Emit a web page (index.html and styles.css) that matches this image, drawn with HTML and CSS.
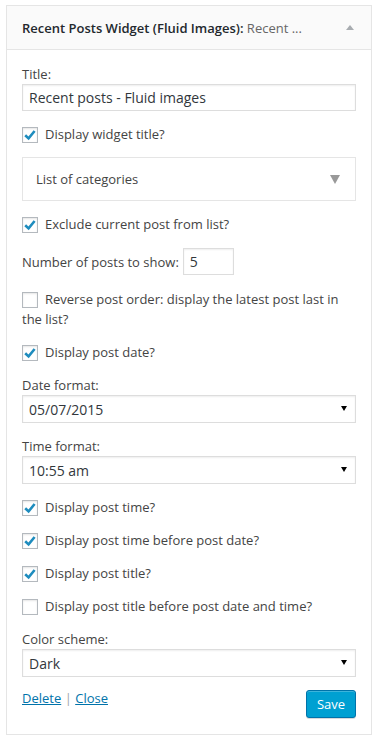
FILE: index.html
```html
<!DOCTYPE html>
<html lang="en">
<head>
<meta charset="utf-8">
<title>Recent Posts Widget</title>
<link rel="stylesheet" href="styles.css">
</head>
<body>
<div class="widget">
  <div class="widget-top">
    <h3 class="widget-title">Recent Posts Widget (Fluid Images):<span class="in-title"> Recent ...</span></h3>
    <svg class="toggle" width="8" height="5" viewBox="0 0 8 5"><path d="M0 5L4 0L8 5Z" fill="#a8acb0"/></svg>
  </div>
  <div class="widget-inside">
    <p class="field">
      <label class="lbl">Title:</label>
      <input class="text-input" type="text" value="Recent posts - Fluid images">
    </p>
    <p class="check"><span class="cb on"><svg width="14" height="14" viewBox="0 0 14 14"><path d="M2.2 7.2L5.6 10.4L11.6 3" fill="none" stroke="#1e8cbe" stroke-width="2.6"/></svg></span>Display widget title?</p>
    <div class="cat-box">
      <span>List of categories</span>
      <svg width="10" height="9" viewBox="0 0 10 9"><path d="M0 0H10L5 9Z" fill="#999"/></svg>
    </div>
    <p class="check"><span class="cb on"><svg width="14" height="14" viewBox="0 0 14 14"><path d="M2.2 7.2L5.6 10.4L11.6 3" fill="none" stroke="#1e8cbe" stroke-width="2.6"/></svg></span>Exclude current post from list?</p>
    <p class="num">
      <span>Number of posts to show:</span>
      <input class="num-input" type="text" value="5">
    </p>
    <p class="check"><span class="cb"></span>Reverse post order: display the latest post last in the list?</p>
    <p class="check"><span class="cb on"><svg width="14" height="14" viewBox="0 0 14 14"><path d="M2.2 7.2L5.6 10.4L11.6 3" fill="none" stroke="#1e8cbe" stroke-width="2.6"/></svg></span>Display post date?</p>
    <div class="field">
      <div class="lbl">Date format:</div>
      <div class="select"><span>05/07/2015</span><svg class="sel-arrow" width="6" height="5" viewBox="0 0 6 5"><path d="M0 0H6L3 5Z" fill="#000"/></svg></div>
    </div>
    <div class="field">
      <div class="lbl">Time format:</div>
      <div class="select"><span>10:55 am</span><svg class="sel-arrow" width="6" height="5" viewBox="0 0 6 5"><path d="M0 0H6L3 5Z" fill="#000"/></svg></div>
    </div>
    <p class="check"><span class="cb on"><svg width="14" height="14" viewBox="0 0 14 14"><path d="M2.2 7.2L5.6 10.4L11.6 3" fill="none" stroke="#1e8cbe" stroke-width="2.6"/></svg></span>Display post time?</p>
    <p class="check"><span class="cb on"><svg width="14" height="14" viewBox="0 0 14 14"><path d="M2.2 7.2L5.6 10.4L11.6 3" fill="none" stroke="#1e8cbe" stroke-width="2.6"/></svg></span>Display post time before post date?</p>
    <p class="check"><span class="cb on"><svg width="14" height="14" viewBox="0 0 14 14"><path d="M2.2 7.2L5.6 10.4L11.6 3" fill="none" stroke="#1e8cbe" stroke-width="2.6"/></svg></span>Display post title?</p>
    <p class="check"><span class="cb"></span>Display post title before post date and time?</p>
    <div class="field">
      <div class="lbl">Color scheme:</div>
      <div class="select"><span>Dark</span><svg class="sel-arrow" width="6" height="5" viewBox="0 0 6 5"><path d="M0 0H6L3 5Z" fill="#000"/></svg></div>
    </div>
    <div class="actions">
      <div class="links"><a href="#">Delete</a> <span class="sep">|</span> <a href="#">Close</a></div>
      <button class="save" type="button">Save</button>
    </div>
  </div>
</div>
</body>
</html>
```
FILE: styles.css
```css
body {
  margin: 5px 5px 0 6px;
  font-family: "Open Sans", "Liberation Sans", sans-serif;
  font-size: 13px;
  color: #444;
  background: #fff;
}

.widget {
  width: 366px;
  box-sizing: border-box;
  border: 1px solid #e5e5e5;
  background: #fff;
  box-shadow: 0 1px 1px rgba(0, 0, 0, 0.04);
}

.widget-top {
  height: 43px;
  background: #fafafa;
  border-bottom: 1px solid #e5e5e5;
  display: flex;
  align-items: center;
  justify-content: space-between;
  padding: 0 17px 0 15px;
}

.widget-title {
  margin: 0;
  font-size: 13px;
  font-weight: 600;
  line-height: 20px;
  color: #23282d;
  white-space: nowrap;
  overflow: hidden;
}

.in-title {
  font-weight: 400;
  color: #666;
}

.toggle {
  display: block;
  flex: none;
}

.widget-inside {
  padding: 1px 15px 16px;
}

p {
  margin: 13px 0;
  line-height: 20px;
}

.field {
  margin: 13px 0;
}

.lbl {
  display: block;
  line-height: 20px;
}

.text-input {
  display: block;
  width: 100%;
  height: 27px;
  box-sizing: border-box;
  margin: 0;
  padding: 0 6px;
  border: 1px solid #ddd;
  border-radius: 0;
  box-shadow: inset 0 1px 2px rgba(0, 0, 0, 0.07);
  font-family: "Open Sans", "Liberation Sans", sans-serif;
  font-size: 14px;
  color: #32373c;
  background: #fff;
  outline: none;
}

.cb {
  display: inline-block;
  width: 16px;
  height: 16px;
  box-sizing: border-box;
  border: 1px solid #b4b9be;
  background: #fff;
  box-shadow: inset 0 1px 2px rgba(0, 0, 0, 0.1);
  vertical-align: -4px;
  margin-right: 7px;
}

.cb svg {
  display: block;
}

.cat-box {
  height: 44px;
  box-sizing: border-box;
  margin: 13px 0;
  border: 1px solid #e5e5e5;
  display: flex;
  align-items: center;
  justify-content: space-between;
  padding: 0 15px 0 13px;
}

.cat-box svg {
  display: block;
}

.num {
  display: flex;
  align-items: center;
  height: 29px;
}

.num-input {
  margin: 0 0 0 4px;
  width: 51px;
  height: 27px;
  box-sizing: border-box;
  padding: 0 6px;
  border: 1px solid #ddd;
  border-radius: 0;
  box-shadow: inset 0 1px 2px rgba(0, 0, 0, 0.07);
  font-family: "Open Sans", "Liberation Sans", sans-serif;
  font-size: 14px;
  color: #32373c;
  background: #fff;
  outline: none;
}

.select {
  height: 28px;
  box-sizing: border-box;
  border: 1px solid #ddd;
  box-shadow: inset 0 1px 2px rgba(0, 0, 0, 0.07);
  display: flex;
  align-items: center;
  justify-content: space-between;
  padding: 0 8px 0 6px;
  font-size: 14px;
  color: #32373c;
  background: #fff;
}

.sel-arrow {
  display: block;
  margin-bottom: 2px;
}

.actions {
  margin-top: 13px;
  display: flex;
  justify-content: space-between;
  align-items: flex-start;
}

.links {
  line-height: 20px;
  margin-top: -2px;
}

.links a {
  color: #0073aa;
  text-decoration: underline;
}

.sep {
  color: #a0a5aa;
}

.save {
  height: 28px;
  width: 50px;
  box-sizing: border-box;
  margin: 0;
  padding: 0 0 1px;
  background: #00a0d2;
  border: 1px solid #0073aa;
  border-radius: 3px;
  color: #fff;
  font-family: "Open Sans", "Liberation Sans", sans-serif;
  font-size: 13px;
  line-height: 26px;
  box-shadow: inset 0 1px 0 rgba(120, 200, 230, 0.5), 0 1px 0 rgba(0, 0, 0, 0.15);
  cursor: pointer;
}
```
